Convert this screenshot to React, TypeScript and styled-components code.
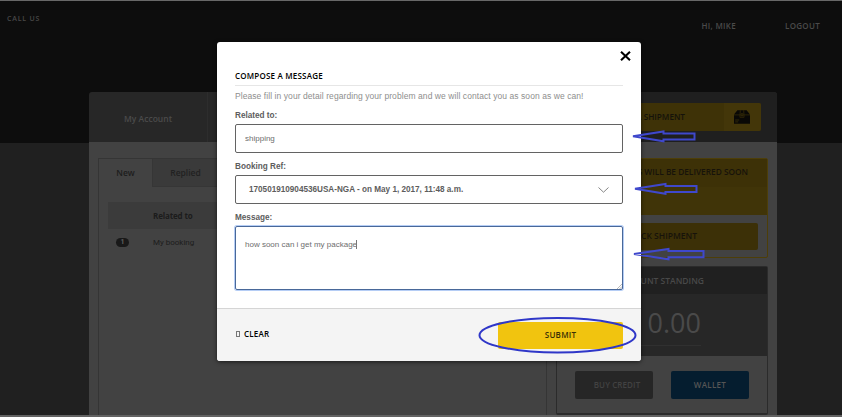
import React from 'react';
import styled, { createGlobalStyle } from 'styled-components';

const Global = createGlobalStyle`
  *, *::before, *::after { box-sizing: border-box; }
  body { margin: 0; background: #202020; overflow: hidden; font-family: "Open Sans", sans-serif; }
  button, input, textarea { font: inherit; margin: 0; }
`;

const Page = styled.div`
  position: relative;
  width: 842px;
  height: 417px;
  overflow: hidden;
  display: flex;
  flex-direction: column;
  border-top: 1px solid #686868;
  border-bottom: 2px solid #626262;
  background: linear-gradient(#0d0d0d 142px, #202020 142px);
`;

const TopBar = styled.header`
  flex: none;
  height: 91px;
  display: flex;
  justify-content: space-between;
  padding: 0 22px 0 7px;
  font-weight: 600;
`;

const CallUs = styled.span`
  margin-top: 12px;
  font-size: 7px;
  line-height: 12px;
  letter-spacing: 0.8px;
  color: #484848;
`;

const UserLinks = styled.nav`
  display: flex;
  gap: 49px;
  margin-top: 19px;
  font-size: 8px;
  line-height: 12px;
  letter-spacing: 0.3px;
  color: #4a4a4a;
`;

const Container = styled.main`
  flex: 1;
  width: 688px;
  margin-left: 89px;
  display: flex;
  flex-direction: column;
  border-radius: 3px 3px 0 0;
  overflow: hidden;
`;

const AccountBar = styled.div`
  flex: none;
  height: 50px;
  display: grid;
  grid-template-columns: 119px 1fr 221px;
  background: #272727;
`;

const AccountTab = styled.div`
  display: flex;
  align-items: center;
  justify-content: center;
  padding-top: 3px;
  border-right: 1px solid #2d2d2d;
  font-size: 8.5px;
  font-weight: 600;
  color: #4b4b4b;
`;

const BookSlot = styled.div`
  grid-column: 3;
  background: #1f1f1f;
  padding: 11px 16px 0 9px;
`;

const BookButton = styled.div`
  height: 28px;
  display: grid;
  grid-template-columns: 1fr 37px;
  border-radius: 2px;
  overflow: hidden;
  background: #3e3207;
  font-size: 8.2px;
  font-weight: 600;
  line-height: 28px;
  color: #15120a;
`;

const BookLabel = styled.span`
  text-align: right;
  padding-right: 39px;
`;

const BookIcon = styled.span`
  display: flex;
  align-items: center;
  justify-content: center;
  padding-right: 1px;
  background: #433609;
`;

const Workspace = styled.div`
  flex: 1;
  display: flex;
  gap: 9px;
  padding: 16px 9px 0;
  background: #424242;
`;

const MessagesPanel = styled.section`
  width: 449px;
  flex: none;
  border: 1px solid #353535;
  border-bottom: 0;
`;

const Tabs = styled.div`
  height: 28px;
  display: grid;
  grid-template-columns: 53px 66px 1fr;
`;

const Tab = styled.div<{ $active?: boolean }>`
  display: flex;
  align-items: center;
  justify-content: center;
  padding-bottom: ${({ $active }) => ($active ? '2px' : '0')};
  font-size: 8.5px;
  font-weight: 600;
  color: ${({ $active }) => ($active ? '#1d1d1d' : '#212121')};
  background: ${({ $active }) => ($active ? '#424242' : '#3a3a3a')};
  border: solid #363636;
  border-width: ${({ $active }) => ($active ? '0' : '0 0 1px 1px')};
`;

const Row = styled.div<{ $head?: boolean }>`
  display: grid;
  grid-template-columns: 45px 1fr;
  align-items: center;
  height: 27px;
  margin: ${({ $head }) => ($head ? '15px 9px 0' : '0 9px')};
  background: ${({ $head }) => ($head ? '#3b3b3b' : 'transparent')};
  font-size: 8px;
  font-family: ${({ $head }) => ($head ? '"Open Sans"' : 'Roboto')}, sans-serif;
  font-weight: ${({ $head }) => ($head ? 700 : 400)};
  letter-spacing: ${({ $head }) => ($head ? '-0.15px' : '0')};
  color: #1c1c1c;
`;

const Badge = styled.span`
  width: 13px;
  height: 9px;
  margin-left: 8px;
  border-radius: 5px;
  background: #191919;
  color: #606060;
  font-size: 7px;
  font-weight: 700;
  line-height: 9px;
  text-align: center;
`;

const SideColumn = styled.aside`
  width: 212px;
  display: flex;
  flex-direction: column;
  gap: 8px;
`;

const DeliveryCard = styled.section`
  height: 100px;
  border: 1px solid #4d3e08;
  border-radius: 2px;
  font-size: 8.5px;
  font-weight: 600;
  color: #17130a;
  text-align: right;
`;

const DeliveryTitle = styled.div`
  height: 28px;
  line-height: 26px;
  padding-right: 19px;
  font-size: 8.3px;
  background: #3d3107;
`;

const DeliveryBody = styled.div`
  height: 28px;
  background: #403408;
`;

const TrackButton = styled.div`
  height: 27px;
  margin: 8px 9px 0 8px;
  padding-right: 61px;
  border-radius: 2px;
  line-height: 26px;
  background: #3c3007;
`;

const AccountCard = styled.section`
  height: 149px;
  border: 1px solid #2b2b2b;
  border-bottom-width: 2px;
  border-radius: 2px;
  text-align: right;
`;

const AccountTitle = styled.div`
  height: 27px;
  padding-right: 63px;
  font-size: 8.5px;
  font-weight: 600;
  line-height: 27px;
  color: #494949;
  background: #202020;
`;

const Balance = styled.div`
  height: 62px;
  padding: 6px 66px 0;
  background: #272727;
`;

const Amount = styled.div`
  height: 46px;
  border-bottom: 1px solid #303030;
  font-size: 27px;
  line-height: 45px;
  color: #4a4a4a;
  display: flex;
  justify-content: flex-end;
`;

const AccountActions = styled.div`
  display: flex;
  gap: 18px;
  padding: 15px 18px;
`;

const ActionButton = styled.div<{ $primary?: boolean }>`
  width: 78px;
  height: 28px;
  padding-left: ${({ $primary }) => ($primary ? '0' : '6px')};
  border-radius: 2px;
  font-size: 8px;
  font-weight: 600;
  line-height: 27px;
  letter-spacing: ${({ $primary }) => ($primary ? '0.3px' : '0.1px')};
  text-align: center;
  color: ${({ $primary }) => ($primary ? '#555' : '#424242')};
  background: ${({ $primary }) => ($primary ? '#051d2f' : '#262626')};
`;

const Dialog = styled.form`
  position: absolute;
  left: 217px;
  top: 41px;
  width: 424px;
  height: 319px;
  display: flex;
  flex-direction: column;
  border-radius: 3px;
  overflow: hidden;
  background: #fff;
  box-shadow: 0 1px 4px rgba(0, 0, 0, 0.6);
`;

const DialogBody = styled.div`
  flex: 1;
  display: flex;
  flex-direction: column;
  padding: 27px 18px 0;
`;

const CloseButton = styled.button`
  position: absolute;
  right: 10px;
  top: 9px;
  padding: 0;
  border: 0;
  background: none;
  line-height: 0;
`;

const Title = styled.h1`
  margin: 0;
  height: 17px;
  border-bottom: 1px solid #e6e6e6;
  font-size: 8px;
  font-weight: 600;
  line-height: 14px;
  letter-spacing: 0.2px;
  color: #000;
`;

const Intro = styled.p`
  margin: 3px 0 -1px;
  font: 8.5px/14px "Liberation Sans", Arial, sans-serif;
  letter-spacing: 0.07px;
  color: #8e8e8e;
  white-space: nowrap;
`;

const Label = styled.div`
  margin-top: 7px;
  height: 15px;
  flex: none;
  font: bold 8.2px/14px "Liberation Sans", Arial, sans-serif;
  color: #5d5d5d;
`;

const TextField = styled.input`
  flex: none;
  width: 388px;
  height: 29px;
  padding: 0 9px;
  border: 1px solid #636363;
  border-radius: 2px;
  outline: 0;
  font: 8px "Liberation Sans", Arial, sans-serif;
  color: #6e6e6e;
`;

const SelectField = styled.div`
  flex: none;
  height: 29px;
  display: flex;
  align-items: center;
  justify-content: space-between;
  padding: 0 13px;
  border: 1px solid #636363;
  border-radius: 2px;
  font: bold 8.17px "Liberation Sans", Arial, sans-serif;
  color: #5d5d5d;
`;

const MessageField = styled.div`
  position: relative;
  flex: none;
  height: 64px;
  padding: 11px 9px;
  border: 1px solid #496899;
  border-radius: 2px;
  box-shadow: 0 0 0 1px #b5cdf5;
  font: 8px/13px "Liberation Sans", Arial, sans-serif;
  color: #6e6e6e;
`;

const Caret = styled.span`
  display: inline-block;
  width: 1px;
  height: 9px;
  margin-left: -1px;
  vertical-align: -2px;
  background: #777;
`;

const ResizeGrip = styled.svg`
  position: absolute;
  right: 0;
  bottom: 0;
`;

const DialogFooter = styled.footer`
  height: 53px;
  display: flex;
  align-items: center;
  justify-content: space-between;
  padding: 0 18px 0 19px;
  border-top: 1px solid #d5d5d5;
  background: #f4f4f4;
  font-size: 8px;
  font-weight: 600;
`;

const ClearButton = styled.button`
  display: flex;
  align-items: center;
  gap: 4px;
  padding: 0 0 3px;
  border: 0;
  background: none;
  color: #000;
  letter-spacing: 0.2px;
`;

const MissingGlyph = styled.span`
  width: 4px;
  height: 6px;
  margin-top: 1px;
  border: 1px solid #777;
`;

const SubmitButton = styled.button`
  width: 125px;
  height: 27px;
  padding: 0 0 2px;
  border: 0;
  border-radius: 2px;
  background: #f1c40f;
  color: #3a3005;
  letter-spacing: 0.25px;
`;

const Annotations = styled.svg`
  position: absolute;
  left: 0;
  top: -1px;
  pointer-events: none;
`;

export default function App() {
  return (
    <>
      <Global />
      <Page>
        <TopBar>
          <CallUs>CALL US</CallUs>
          <UserLinks>
            <span>HI, MIKE</span>
            <span>LOGOUT</span>
          </UserLinks>
        </TopBar>
        <Container>
          <AccountBar>
            <AccountTab>My Account</AccountTab>
            <BookSlot>
              <BookButton>
                <BookLabel>BOOK A SHIPMENT</BookLabel>
                <BookIcon>
                  <svg width="16" height="14" viewBox="0 0 16 14">
                    <path d="M3.4.3h9.200L16 4.600V13.700H0V4.600z" fill="#090806" />
                    <path d="M0 4.900h5.900M10.100 4.900H16M6.300.3 5.900 7.300h4.200L9.700.3" fill="none" stroke="#433609" strokeWidth=".6" />
                    <path d="M7 3.800h2v2H7zM1.200 10h4M1.200 11.900h3" fill="none" stroke="#433609" strokeWidth=".7" />
                  </svg>
                </BookIcon>
              </BookButton>
            </BookSlot>
          </AccountBar>
          <Workspace>
            <MessagesPanel>
              <Tabs>
                <Tab $active>New</Tab>
                <Tab>Replied</Tab>
                <Tab />
              </Tabs>
              <Row $head>
                <span />
                <span>Related to</span>
              </Row>
              <Row>
                <Badge>1</Badge>
                <span>My booking</span>
              </Row>
            </MessagesPanel>
            <SideColumn>
              <DeliveryCard>
                <DeliveryTitle>SHIPMENTS WILL BE DELIVERED SOON</DeliveryTitle>
                <DeliveryBody />
                <TrackButton>TRACK SHIPMENT</TrackButton>
              </DeliveryCard>
              <AccountCard>
                <AccountTitle>ACCOUNT STANDING</AccountTitle>
                <Balance>
                  <Amount>0.00</Amount>
                </Balance>
                <AccountActions>
                  <ActionButton>BUY CREDIT</ActionButton>
                  <ActionButton $primary>WALLET</ActionButton>
                </AccountActions>
              </AccountCard>
            </SideColumn>
          </Workspace>
        </Container>

        <Dialog onSubmit={(e) => e.preventDefault()}>
          <CloseButton type="button" aria-label="Close">
            <svg width="11" height="10" viewBox="0 0 11 10" stroke="#000" strokeWidth="2.1">
              <path d="M1 .8 10 9.2M10 .8 1 9.2" />
            </svg>
          </CloseButton>
          <DialogBody>
            <Title>COMPOSE A MESSAGE</Title>
            <Intro>
              Please fill in your detail regarding your problem and we will contact you as soon as we can!
            </Intro>
            <Label>Related to:</Label>
            <TextField aria-label="Related to" defaultValue="shipping" />
            <Label>Booking Ref:</Label>
            <SelectField>
              170501910904536USA-NGA - on May 1, 2017, 11:48 a.m.
              <svg width="11" height="6" viewBox="0 0 11 6" fill="none" stroke="#777" strokeWidth=".9">
                <path d="M.5.5 5.5 5.2 10.5.5" />
              </svg>
            </SelectField>
            <Label>Message:</Label>
            <MessageField>
              how soon can i get my package
              <Caret />
              <ResizeGrip width="5" height="5" viewBox="0 0 5 5" stroke="#999" strokeWidth=".7">
                <path d="M0 5 5 0M2.5 5 5 2.5" />
              </ResizeGrip>
            </MessageField>
          </DialogBody>
          <DialogFooter>
            <ClearButton type="reset">
              <MissingGlyph />
              CLEAR
            </ClearButton>
            <SubmitButton type="submit">SUBMIT</SubmitButton>
          </DialogFooter>
        </Dialog>

        <Annotations width="842" height="417" fill="none" stroke="#3f48cc" strokeWidth="2">
          <path d="M633 136.300 663.500 131.500V133.500H694.500V139.500H663.500V141.300Z" />
          <path d="M635 188.800 665.500 184V186H696.500V192H665.500V193.800Z" />
          <path d="M634 254 668.500 249V251H703.500V257.200H668.500V259.300Z" />
          <ellipse cx="557.500" cy="335.200" rx="78" ry="17.300" stroke="#2f37c8" />
        </Annotations>
      </Page>
    </>
  );
}
